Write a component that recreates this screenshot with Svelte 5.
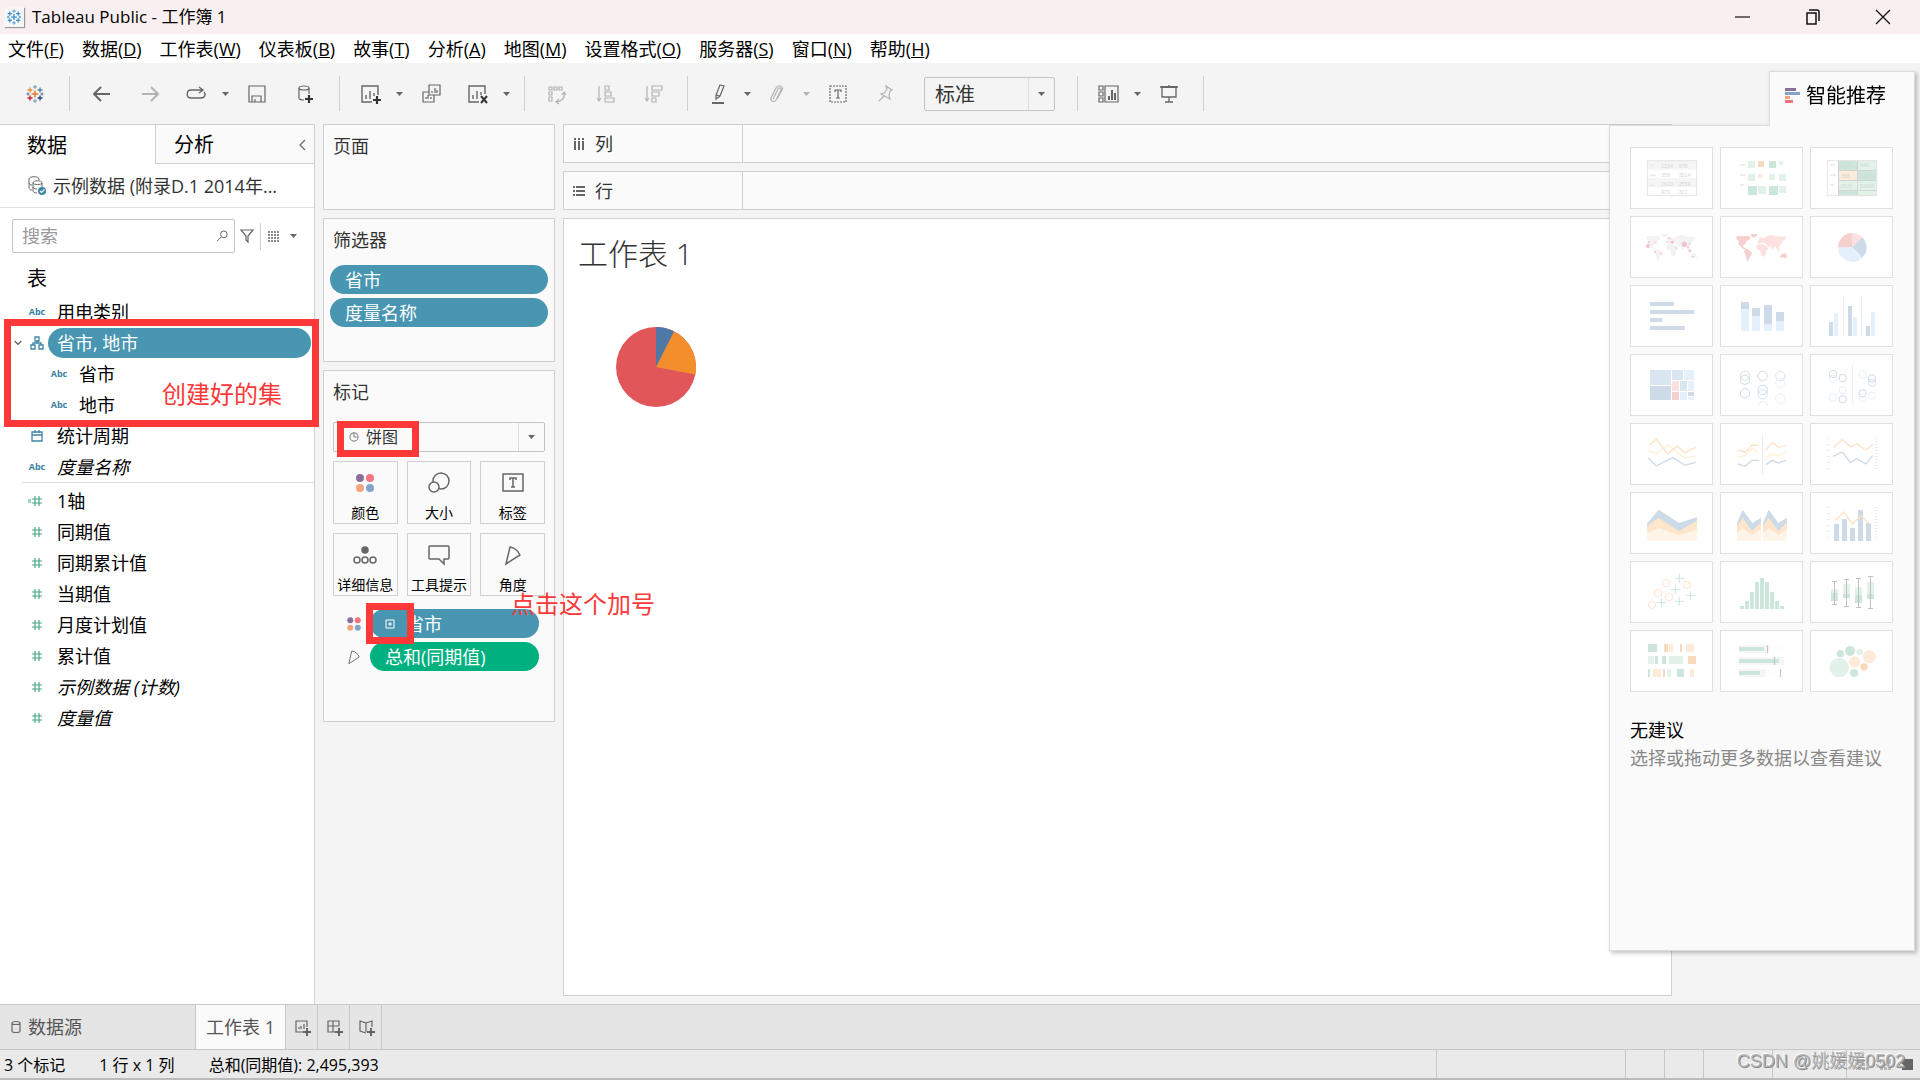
<script>
  const menus = [
    ["文件", "F"],
    ["数据", "D"],
    ["工作表", "W"],
    ["仪表板", "B"],
    ["故事", "T"],
    ["分析", "A"],
    ["地图", "M"],
    ["设置格式", "O"],
    ["服务器", "S"],
    ["窗口", "N"],
    ["帮助", "H"],
  ];

  const cross = (x, y, s, color, w = 1) =>
    `<path d="M${x - s} ${y}h${s * 2}M${x} ${y - s}v${s * 2}" stroke="${color}" stroke-width="${w}"/>`;
  const logo = (c) =>
    cross(12, 12, 3.5, c[0], 1.5) +
    cross(7, 8, 2.5, c[1], 1.4) +
    cross(17, 8, 2.5, c[2], 1.4) +
    cross(7, 16, 2.5, c[3], 1.4) +
    cross(17, 16, 2.5, c[4], 1.4) +
    cross(12, 5, 2, c[5]) +
    cross(12, 19, 2, c[5]) +
    cross(5, 12, 1.5, c[6]) +
    cross(19, 12, 1.5, c[6]);
  const plus = (x, y) => cross(x, y, 4, "#333", 2.2);

  const icons = {
    logo: logo(["#e8762d", "#eb912c", "#5b879b", "#c72035", "#1f457e", "#7199a6", "#5c6692"]),
    logoBlue: logo(Array(7).fill("#3a8fc4")),
    back: '<path d="M20 12H5M11 5l-7 7 7 7" stroke-width="2"/>',
    forward: '<path d="M4 12h15M13 5l7 7-7 7" stroke-width="2"/>',
    redo: '<path d="M18 8H7c-5 0-5 8 0 8h10c4 0 5-4 3-6M15 5l4 3-4 3" stroke-width="1.4"/>',
    save: '<path d="M4 4h16v16H4zM7 20v-6h9v6M10 17v3"/>',
    addData:
      '<ellipse cx="11" cy="6" rx="5" ry="2"/><path d="M6 6v10c0 1 2 2 5 2M16 6v6"/>' + plus(16, 17),
    newSheet: '<path d="M20 13V4H4v16h10M8 17v-4M12 17V9M16 14v-3" stroke-width="1.4"/>' + plus(19, 18),
    duplicate: '<path d="M10 3h11v10H10zM10 10H4v10h11v-7M13 11V9M16 11V6M18 11V8M7 17v-2M9 17v-4M12 17v-2"/>',
    clear:
      '<path d="M20 12V4H4v16h10M8 17v-4M12 17V9M16 13v-3" stroke-width="1.4"/><path d="M16 14l6 7M22 14l-6 7" stroke="#333" stroke-width="2"/>',
    swap: '<path d="M4 5h3v3H4zM9 5h3v3H9zM14 5h3v3h-3zM4 10h3v3H4zM4 15h3v4H4zM19 11c1 5-2 8-7 9M17 13l2-3 2 3M14 17l-3 3 3 2"/>',
    sortAsc: '<path d="M6 4v15M4 16l2 3 2-3M12 4h4v4h-4zM12 10h6v4h-6zM12 16h9v4h-9z"/>',
    sortDesc: '<path d="M6 4v15M4 16l2 3 2-3M11 4h10v4H11zM11 10h7v4h-7zM11 16h4v4h-4z"/>',
    pen: '<path d="M14 3l4 1-4 10-4 3v-4zM10 13l4 1" stroke-width="1.2"/><path d="M6 21h12" stroke-width="2"/>',
    clip: '<path d="M8 17l5-10c1-2 4-1 3 1l-5 10c-2 3-6 1-5-2l5-10c2-4 8-2 6 2l-5 9"/>',
    text: '<path d="M4 4h16v16H4z" stroke-dasharray="2 1"/><path d="M9 10V8h6v2M12 8v8M10 16h4"/>',
    pin: '<path d="M12 4l6 4-2 1-1 5 1 3-9-5 3-1 3-4zM10 14l-5 5"/>',
    cards: '<path d="M9 4h13v16H9zM3 4h4v4H3zM3 10h4v4H3zM3 16h4v4H3z"/><path d="M13 18v-4M16 18V8M19 18v-7" stroke-width="2"/>',
    present: '<path d="M3 5h18M5 5v10h14V5M12 15v5M8 20h8M12 3v2" stroke-width="1.3"/><path d="M4 5h16" stroke-width="2"/>',
    min: '<path d="M4 12h15" stroke="#111"/>',
    restore: '<path d="M6 8h9v11H6zM8 5h8q2 0 2 2v9" stroke="#111" stroke-width="1.5"/>',
    close: '<path d="M5 5l14 14M19 5L5 19" stroke="#111" stroke-width="1.3"/>',
    source:
      '<path d="M4 5c0-3 10-3 10 0v1M4 5v9c0 1 1 2 3 2M4 9c0 1 1 2 3 2M8 9c0-3 9-3 9 0v4M8 9v8c0 1 2 2 4 2M8 9c0 2 9 2 9 0M8 13c0 1 2 2 4 2" stroke-width="1"/><circle cx="17" cy="17" r="4" fill="#3d86a8" stroke="none"/><path d="M15 17l1.5 1.5 3-3" stroke="#fff"/>',
    search: '<circle cx="13" cy="10" r="4"/><path d="M10 13l-5 5"/>',
    filter: '<path d="M6 6h12l-5 6v6l-2-2v-4z"/>',
    grid: '<path d="M6 8h12M6 11h12M6 14h12M6 17h12" stroke-width="1.6" stroke-dasharray="2 1"/>',
    chevLeft: '<path d="M15 7l-5 5 5 5"/>',
    chevDown: '<path d="M7 9l5 5 5-5" stroke-width="2"/>',
    hierarchy: '<path d="M10 6h4v4h-4zM6 14h4v4H6zM14 14h4v4h-4zM12 10v2M8 14v-2h8v2" stroke="#3d86a8" stroke-width="1.3"/>',
    date: '<path d="M7 8h10v9H7zM7 11h10M10 6v3M14 6v3" stroke="#3d86a8" stroke-width="1.3"/>',
    number: '<path d="M10 7v10M14 7v10M7 10h10M7 14h10" stroke="#4aa886" stroke-width="1.2"/>',
    calc: '<path d="M10 7v10M14 7v10M7 10h10M7 14h10M3 11h3M3 13h3" stroke="#4aa886" stroke-width="1.2"/>',
    columns: '<path d="M8 6v2M12 6v2M16 6v2M8 9v9M12 9v9M16 9v9" stroke-width="2"/>',
    rows: '<path d="M6 8h2M6 12h2M6 16h2M9 8h9M9 12h9M9 16h9" stroke-width="2"/>',
    pie: '<circle cx="12" cy="12" r="4.5" stroke="#888"/><path d="M12 8v4h4" stroke="#888"/>',
    color:
      '<g stroke="none"><circle cx="7" cy="7" r="4" fill="#8a719b"/><circle cx="17" cy="7" r="4" fill="#f6737f"/><circle cx="7" cy="17" r="4" fill="#f2a57d"/><circle cx="17" cy="17" r="4" fill="#82a4ca"/></g>',
    size: '<circle cx="14" cy="10" r="8"/><circle cx="7" cy="16" r="5" fill="#fafafa"/>',
    label: '<path d="M2 3h20v17H2z"/><path d="M9 9V7h6v2M12 7v9M10 16h4"/>',
    detail: '<circle cx="12" cy="7" r="3" fill="#666"/><circle cx="4" cy="17" r="3"/><circle cx="12" cy="17" r="3"/><circle cx="20" cy="17" r="3"/>',
    tooltip: '<path d="M3 3h18q1 0 1 1v11q0 1-1 1h-4v5l-5-5H3q-1 0-1-1V4q0-1 1-1z"/>',
    angle: '<path d="M5 21L9 4c6 1 8 4 10 8z"/>',
    expand: '<path d="M8 8h8v8H8zM12 10v4M10 12h4" stroke="#fff" stroke-width="1"/>',
    datasource: '<path d="M8 8c0-2 8-2 8 0v8c0 2-8 2-8 0zM8 8c0 2 8 2 8 0"/>',
    addSheet: '<path d="M17 12V6H6v11h7M9 14v-2M11 14v-3M14 14V9"/><path d="M13 17h8M17 13v8" stroke-width="2"/>',
    addDash: '<path d="M17 11V6H6v11h7M11 6v11M6 11h11"/><path d="M13 17h8M17 13v8" stroke-width="2"/>',
    addStory: '<path d="M12 17V8L6 6v10l6 2M12 8l6-2v6"/><path d="M13 17h8M17 13v8" stroke-width="2"/>',
  };

  // "|" is a separator, a trailing caret marks a drop-down, off = disabled
  const tools = [
    { icon: "back", name: "撤消" },
    { icon: "forward", name: "重做", off: true },
    { icon: "redo", name: "重播", caret: true },
    { icon: "save", name: "保存" },
    { icon: "addData", name: "新建数据源" },
    "|",
    { icon: "newSheet", name: "新建工作表", caret: true },
    { icon: "duplicate", name: "复制" },
    { icon: "clear", name: "清除", caret: true },
    "|",
    { icon: "swap", name: "交换行和列", off: true },
    { icon: "sortAsc", name: "升序", off: true },
    { icon: "sortDesc", name: "降序", off: true },
    "|",
    { icon: "pen", name: "突出显示", caret: true },
    { icon: "clip", name: "组", caret: true, off: true },
    { icon: "text", name: "标签" },
    { icon: "pin", name: "固定", off: true },
  ];
  const toolsRight = [
    { icon: "cards", name: "显示/隐藏卡", caret: true },
    { icon: "present", name: "演示模式" },
  ];

  const dimensions = [
    { icon: "abc", text: "用电类别" },
    { icon: "hierarchy", text: "省市, 地市", selected: true },
    { icon: "abc", text: "省市", child: true },
    { icon: "abc", text: "地市", child: true },
    { icon: "date", text: "统计周期" },
    { icon: "abc", text: "度量名称", italic: true },
  ];
  const measures = [
    { icon: "calc", text: "1轴" },
    { icon: "number", text: "同期值" },
    { icon: "number", text: "同期累计值" },
    { icon: "number", text: "当期值" },
    { icon: "number", text: "月度计划值" },
    { icon: "number", text: "累计值" },
    { icon: "number", text: "示例数据 (计数)", italic: true },
    { icon: "number", text: "度量值", italic: true },
  ];

  const marks = [
    ["color", "颜色"],
    ["size", "大小"],
    ["label", "标签"],
    ["detail", "详细信息"],
    ["tooltip", "工具提示"],
    ["angle", "角度"],
  ];

  // thumbnail palette
  const B = "#cddae7";
  const M = "#d9e5f0";
  const L = "#e4f0fb";
  const G = "#cde6db";
  const g = "#e2f2e9";
  const O = "#fadabf";
  const o = "#feead8";
  const P = "#f6cfcf";
  const p = "#fde0e0";
  const Y = "#fff0d4";
  const E = "#ededed";

  const rects = (list) =>
    list.map(([x, y, w, h, f]) => `<rect x="${x}" y="${y}" width="${w}" height="${h}" fill="${f}"/>`).join("");
  const dots = (list) => list.map(([x, y, r, f]) => `<circle cx="${x}" cy="${y}" r="${r}" fill="${f}"/>`).join("");
  const rings = (list, r) =>
    list.map(([x, y, c]) => `<circle cx="${x}" cy="${y}" r="${r}" fill="none" stroke="${c}" stroke-width="3"/>`).join("");
  const line = (pts, c) => `<polyline points="${pts}" fill="none" stroke="${c}" stroke-width="4"/>`;
  const area = (pts, c) => `<polygon points="${pts}" fill="${c}"/>`;
  const nums = (list) =>
    list
      .map(([x, y, t]) => `<text x="${x}" y="${y}" font-size="16" font-family="Liberation Sans, sans-serif" fill="#d4d8d6">${t}</text>`)
      .join("");
  const frame = '<rect x="52" y="41" width="148" height="105" fill="none" stroke="#e4e4e4" stroke-width="3"/>';
  const ticks =
    rects([46, 64, 82, 100, 118, 136].map((y) => [51, y - 1, 9, 3, E])) +
    rects([46, 55, 64, 73, 82, 91, 100, 109, 118, 127, 136].map((y) => [195, y - 1, 9, 3, E]));
  const world = (a, b) =>
    area("48,62 58,60 70,61 84,59 93,65 88,71 80,75 77,83 70,87 69,92 76,97 81,101 70,98 62,92 56,84 56,74 50,70", a) +
    area("91,58 96,54 113,54 110,60 102,65 96,62", a) +
    area("74,99 84,100 97,110 92,120 87,128 83,138 80,130 77,116 72,107", a) +
    area("112,80 116,72 120,64 132,66 142,59 154,57 170,61 198,63 196,70 188,75 185,83 180,88 177,93 179,108 171,100 165,90 158,103 150,91 144,94 136,82 124,80 118,83", b) +
    area("109,88 118,83 132,86 140,90 145,98 138,106 138,115 130,124 124,116 121,104 111,100", b) +
    area("180,119 190,112 196,112 202,121 198,127 190,124 181,125", a);
  const bullet = [
    [75, 141],
    [120, 162],
    [63, 180],
  ];
  const boxes = [
    [63, 84, 96, 120, 61, 131],
    [99, 69, 99, 111, 55, 137],
    [135, 78, 102, 126, 52, 140],
    [171, 63, 99, 114, 46, 143],
  ];

  const thumbs = [
    ["文本表", rects([[52, 41, 148, 27, "#f5f5f5"], [52, 93, 148, 27, "#f5f5f5"], [60, 52, 15, 6, E], [60, 82, 18, 6, E], [60, 112, 12, 6, E]]) +
      nums([[93, 62, "1234"], [146, 62, "678"], [94, 89, "358"], [146, 89, "3014"], [93, 116, "2620"], [146, 116, "2559"], [94, 140, "971"], [146, 140, "322"]]) + frame],
    ["热图", rects([[60, 51, 15, 6, E], [60, 81, 18, 6, E], [60, 111, 12, 6, E], [84, 42, 21, 21, g], [114, 42, 18, 18, O], [147, 42, 21, 21, G], [177, 42, 12, 12, g], [84, 81, 21, 21, g], [114, 81, 12, 12, o], [147, 81, 18, 18, g], [177, 81, 21, 21, g], [84, 117, 27, 27, G], [114, 117, 24, 24, g], [147, 117, 27, 27, G], [177, 117, 21, 21, g]])],
    ["突出显示表", rects([[84, 41, 116, 105, "#d0d5d2"], [87, 42, 54, 27, G], [144, 42, 54, 27, g], [87, 72, 54, 27, o], [144, 72, 54, 27, G], [87, 102, 54, 27, g], [144, 102, 54, 27, g], [87, 132, 54, 12, G], [144, 132, 54, 12, g], [60, 51, 15, 6, E], [60, 81, 18, 6, E], [60, 111, 12, 6, E]]) +
      nums([[91, 60, "1234"], [150, 60, "546"], [92, 92, "358"], [150, 92, "310"], [91, 122, "2620"], [150, 122, "53890"]]) + frame],
    ["符号地图", world("#f3f3f3", "#f3f3f3") + dots([[54, 90, 6, "#eec4ca"], [57, 78, 3, "#eec4ca"], [76, 79, 5, p], [75, 108, 3, "#eec4ca"], [93, 112, 5, p], [112, 78, 4, p], [117, 67, 4, P], [127, 79, 5, "#eec4ca"], [138, 96, 3, P], [163, 85, 8, "#eec4ca"], [177, 84, 3, P], [174, 93, 3, "#eec4ca"], [179, 104, 5, P], [189, 122, 3, "#eec4ca"]])],
    ["地图", world(P, p)],
    ["饼图", `<path d="M127 94V51A43 43 0 0 1 157 64Z" fill="${p}"/><path d="M127 94L157 64A43 43 0 0 1 157 125Z" fill="${B}"/><path d="M127 94L157 125A43 43 0 0 1 84 94Z" fill="${L}"/><path d="M127 94H84A43 43 0 0 1 127 51Z" fill="${P}"/>`],
    ["水平条", rects([[60, 51, 72, 12, B], [60, 75, 132, 12, B], [60, 99, 36, 12, B], [60, 123, 105, 12, B]])],
    ["堆叠条", rects([[63, 51, 24, 21, B], [63, 72, 24, 66, L], [96, 69, 24, 24, B], [96, 93, 24, 45, L], [132, 60, 24, 57, B], [132, 117, 24, 21, L], [168, 81, 24, 27, B], [168, 108, 24, 30, L]])],
    ["并排条", rects([[57, 111, 12, 42, B], [72, 84, 12, 69, L], [99, 33, 3, 120, E], [114, 63, 12, 90, B], [129, 96, 12, 57, L], [153, 33, 3, 120, E], [168, 123, 12, 30, B], [183, 81, 12, 72, L]])],
    ["树状图", rects([[60, 48, 63, 45, M], [60, 96, 63, 42, B], [126, 48, 33, 30, M], [162, 48, 30, 30, L], [126, 81, 21, 30, p], [150, 81, 21, 30, M], [174, 81, 18, 30, L], [126, 114, 21, 24, P], [150, 114, 21, 24, L], [174, 114, 18, 12, B], [174, 129, 18, 9, L]])],
    ["圆视图", rings([[75, 65, M], [75, 77, B], [75, 118, B], [128, 66, B], [128, 121, M], [128, 108, B], [181, 66, M], [181, 87, L], [181, 134, L]], 14) + `<path d="M114 156a14 14 0 0 1 28 0" fill="none" stroke="${L}" stroke-width="3"/>`],
    ["并排圆", rings([[69, 74, L], [69, 60, B], [98, 72, B], [98, 108, L], [69, 130, L], [98, 136, B], [158, 61, L], [186, 86, M], [186, 73, B], [158, 118, B], [158, 131, L], [186, 125, L]], 11) + rects([[126, 33, 3, 120, E]])],
    ["线(连续)", line("55,82 79,92 113,66 164,106 197,99", Y) + line("58,66 79,48 113,93 142,69 164,90 197,73", "#fde2c8") + line("55,106 79,129 129,103 164,127 197,118", B)],
    ["线(离散)", line("54,103 75,97 96,76 116,91", Y) + line("136,104 157,94 175,99 198,87", Y) + line("54,81 76,87 96,66 117,67", "#fde2c8") + line("137,82 157,58 175,73 198,67", "#fde2c8") + line("54,123 75,130 96,112 117,112", B) + line("138,125 157,112 175,120 198,112", B) + rects([[126, 33, 3, 120, E]])],
    ["双线", ticks + line("70,74 97,49 122,72 140,62 168,81 188,65", "#fde2c8") + line("69,100 97,87 122,119 140,107 168,123 188,98", B)],
    ["面积图(连续)", area("51,95 86,53 147,93 201,76 201,147 51,147", B) + area("51,102 86,77 147,117 201,86 201,147 51,147", "#fee5cc") + area("51,124 86,109 147,130 201,113 201,147 51,147", "#fff4e8")],
    ["面积图(离散)", [0, 78].map((d) => `<g transform="translate(${d} 0)">` + area("51,94 68,53 97,93 123,77 123,147 51,147", B) + area("51,102 68,77 97,117 123,90 123,147 51,147", "#fee5cc") + area("51,124 68,109 97,129 123,112 123,147 51,147", "#fff4e8") + "</g>").join("")],
    ["双组合", ticks + rects([[72, 96, 15, 51, B], [96, 81, 15, 66, B], [120, 108, 15, 39, B], [144, 54, 15, 93, B], [168, 93, 15, 54, B]]) + line("76,85 102,60 127,96 153,72 180,97", "#fde2c8")],
    ["散点图", rings([[66, 132, "#fee4cc"], [84, 96, "#fee4cc"], [117, 108, "#fee4cc"], [108, 66, "#fee4cc"], [171, 72, "#fee4cc"]], 11) + [[148, 52], [136, 86], [94, 125], [148, 121], [181, 104]].map(([x, y]) => cross(x, y, 14, G, 3)).join("")],
    ["直方图", rects([135, 120, 93, 63, 51, 63, 93, 120, 135].map((y, i) => [60 + i * 15, y, 12, 144 - y, G]))],
    ["盒须图", boxes.map(([x, a, b, c, t, e]) => rects([[x, a, 21, b - a, g], [x, b, 21, c - b, G], [x + 9, t, 3, e - t, "#c0c0c0"], [x + 3, t - 1, 15, 3, "#c0c0c0"], [x + 3, e - 2, 15, 3, "#c0c0c0"]])).join("")],
    ["甘特图", rects([[54, 42, 27, 24, G], [102, 42, 12, 24, O], [117, 42, 12, 24, o], [150, 42, 6, 24, O], [168, 42, 24, 24, o], [54, 78, 18, 24, g], [75, 78, 9, 24, G], [96, 78, 12, 24, G], [117, 78, 42, 24, g], [174, 78, 24, 24, O], [54, 117, 6, 24, G], [69, 117, 24, 24, o], [99, 117, 6, 24, O], [111, 117, 12, 24, g], [141, 117, 21, 24, G], [180, 117, 12, 24, o]])],
    ["标靶图", bullet.map(([w, m], i) => rects([[57, 45 + i * 36, 138, 24, "#fcfdfc"], [57, 45 + i * 36, w + 15, 24, "#f6f6f6"], [57, 51 + i * 36, w, 12, G], [m, 45 + i * 36, 3, 24, "#c0c0c0"]])).join("")],
    ["填充气泡图", dots([[88, 113, 29, g], [91, 71, 11, G], [120, 63, 15, G], [149, 66, 10, g], [178, 80, 20, o], [134, 96, 17, o], [162, 111, 11, O], [132, 129, 12, G]])],
  ];
</script>

{#snippet icon(name, size = 24)}
  <svg class="icon" width={size} height={size} viewBox="0 0 24 24" aria-hidden="true">{@html icons[name]}</svg>
{/snippet}

{#snippet caret()}
  <svg class="caret" width="7" height="4" viewBox="0 0 7 4" aria-hidden="true"><path d="M0 0h7L3.5 4z" /></svg>
{/snippet}

{#snippet tool(t)}
  {#if t === "|"}
    <span class="sep"></span>
  {:else}
    <button class="tool" class:split={t.caret} class:off={t.off} aria-label={t.name}>{@render icon(t.icon)}</button>
    {#if t.caret}
      <button class="drop" class:off={t.off} aria-label="{t.name}选项">{@render caret()}</button>
    {/if}
  {/if}
{/snippet}

{#snippet field(f)}
  <li class:child={f.child} class:italic={f.italic}>
    <span class="twist">{#if f.selected}{@render icon("chevDown", 16)}{/if}</span>
    <span class="type">
      {#if f.icon === "abc"}<b>Abc</b>{:else}{@render icon(f.icon, 24)}{/if}
    </span>
    <span class="name" class:selected={f.selected}>{f.text}</span>
  </li>
{/snippet}

<div class="app">
  <header class="titlebar">
    <span class="appicon">{@render icon("logoBlue", 20)}</span>
    <h1>Tableau Public - 工作簿 1</h1>
    <div class="window">
      <button aria-label="最小化">{@render icon("min")}</button>
      <button aria-label="还原">{@render icon("restore")}</button>
      <button aria-label="关闭">{@render icon("close")}</button>
    </div>
  </header>

  <nav class="menubar">
    {#each menus as [text, key]}
      <button>{text}(<u>{key}</u>)</button>
    {/each}
  </nav>

  <div class="toolbar">
    <button class="home" aria-label="开始页面">{@render icon("logo")}</button>
    <span class="sep first"></span>
    {#each tools as t}{@render tool(t)}{/each}
    <div class="select fit">
      <select aria-label="适合"><option>标准</option></select>
      <span class="arrow">{@render caret()}</span>
    </div>
    <span class="sep"></span>
    {#each toolsRight as t}{@render tool(t)}{/each}
    <span class="sep"></span>
  </div>

  <main>
    <aside class="data">
      <div class="tabs">
        <button class="active">数据</button>
        <button class="inactive">分析 {@render icon("chevLeft")}</button>
      </div>
      <div class="source">{@render icon("source")}<span>示例数据 (附录D.1 2014年...</span></div>
      <div class="find">
        <div class="searchbox">
          <input type="text" placeholder="搜索" aria-label="搜索" />
          {@render icon("search", 20)}
        </div>
        <button aria-label="筛选">{@render icon("filter")}</button>
        <span class="bar"></span>
        <button aria-label="视图">{@render icon("grid")}</button>
        <button class="more" aria-label="更多">{@render caret()}</button>
      </div>
      <h2>表</h2>
      <ul>
        {#each dimensions as f}{@render field(f)}{/each}
      </ul>
      <ul class="measures">
        {#each measures as f}{@render field(f)}{/each}
      </ul>
    </aside>

    <section class="cards">
      <div class="card pages"><h3>页面</h3></div>
      <div class="card filters">
        <h3>筛选器</h3>
        <button class="pill">省市</button>
        <button class="pill">度量名称</button>
      </div>
      <div class="card marks">
        <h3>标记</h3>
        <div class="select type-select">
          <span class="lead">{@render icon("pie", 22)}</span>
          <select aria-label="标记类型"><option>饼图</option></select>
          <span class="arrow">{@render caret()}</span>
        </div>
        <div class="buttons">
          {#each marks as [name, text]}
            <button>{@render icon(name)}<span>{text}</span></button>
          {/each}
        </div>
        <div class="encoding">
          {@render icon("color", 18)}
          <button class="pill">{@render icon("expand")}省市</button>
        </div>
        <div class="encoding">
          {@render icon("angle", 18)}
          <button class="pill green">总和(同期值)</button>
        </div>
      </div>
    </section>

    <section class="work">
      <div class="shelf"><div>{@render icon("columns")}列</div></div>
      <div class="shelf"><div>{@render icon("rows")}行</div></div>
      <div class="sheet">
        <h2>工作表 1</h2>
        <svg width="80" height="80" viewBox="-40 -40 80 80" role="img" aria-label="饼图">
          <circle r="40" fill="#e15759" />
          <path d="M0 0V-40A40 40 0 0 1 18.2 -35.6Z" fill="#4e79a7" />
          <path d="M0 0L18.2 -35.6A40 40 0 0 1 39.3 7.6Z" fill="#f28e2b" />
        </svg>
      </div>
    </section>
  </main>

  <footer>
    <div class="sheets">
      <button class="ds">{@render icon("datasource")}数据源</button>
      <button class="current">工作表 1</button>
      <button class="add" aria-label="新建工作表">{@render icon("addSheet")}</button>
      <button class="add" aria-label="新建仪表板">{@render icon("addDash")}</button>
      <button class="add" aria-label="新建故事">{@render icon("addStory")}</button>
    </div>
    <div class="status">
      <span>3 个标记</span>
      <span>1 行 x 1 列</span>
      <span>总和(同期值): 2,495,393</span>
      <div class="cells"><i></i><i></i><i></i><i></i><i></i><i></i></div>
    </div>
  </footer>

  <aside class="showme">
    <button class="head">
      <svg width="16" height="17" viewBox="0 0 16 17" aria-hidden="true">
        <path d="M0 1h11v3H0z" fill="#8a719b" />
        <path d="M0 5h15v3H0z" fill="#82a4ca" />
        <path d="M0 9h5v3H0z" fill="#f2a57d" />
        <path d="M0 13h8v3H0z" fill="#f6737f" />
      </svg>
      智能推荐
    </button>
    <div class="panel">
      <div class="thumbs">
        {#each thumbs as [name, art]}
          <button aria-label={name}><svg viewBox="3 3 243 180">{@html art}</svg></button>
        {/each}
      </div>
      <p class="none">无建议</p>
      <p class="hint">选择或拖动更多数据以查看建议</p>
    </div>
  </aside>

  <div class="mark set"></div>
  <div class="mark kind"></div>
  <div class="mark plus"></div>
  <span class="note note-set">创建好的集</span>
  <span class="note note-plus">点击这个加号</span>
  <div class="views">
    <svg width="132" height="12" viewBox="0 0 132 12" aria-hidden="true">
      <path d="M5 2v8L0 6zM22 2v8l-5-4z" fill="#c4c4c4" />
      <path d="M76 1h11v3H76zM76 5h3v3h-3zM80 5h3v3h-3zM84 5h3v3h-3zM76 9h3v3h-3zM80 9h3v3h-3zM84 9h3v3h-3zM98 1h11v7H98zM98 9h3v3h-3zM102 9h3v3h-3zM106 9h3v3h-3z" fill="#b8b8b8" />
      <path d="M120 1h11v11h-11z" fill="#666" />
    </svg>
  </div>
  <span class="watermark">CSDN @姚媛媛0502</span>
</div>

<style>
  :global(body) {
    margin: 0;
  }
  .app {
    --line: #d0d0d0;
    --blue: #4996b2;
    --red: #fc3838;
    position: relative;
    display: flex;
    flex-direction: column;
    min-height: 100vh;
    overflow: hidden;
    background: #f4f4f4;
    color: #000;
    font: 18px/24px "Open Sans", "Noto Sans CJK SC", sans-serif;
  }
  .app * {
    box-sizing: border-box;
  }
  button,
  select,
  input {
    margin: 0;
    padding: 0;
    border: 0;
    border-radius: 0;
    background: none;
    color: inherit;
    font: inherit;
  }
  h1,
  h2,
  h3,
  p,
  ul {
    margin: 0;
    padding: 0;
    font-weight: 400;
    list-style: none;
  }
  .icon {
    flex: none;
    fill: none;
    stroke: #666;
    stroke-width: 1.2;
  }
  .caret {
    fill: #666;
  }
  .off {
    opacity: 0.45;
  }

  .titlebar {
    display: flex;
    align-items: center;
    height: 34px;
    background: #f9eff0;
  }
  .appicon {
    display: flex;
    margin-left: 4px;
    background: #f4f6f8;
    box-shadow: 1px 1px 1px #999;
  }
  h1 {
    flex: 1;
    margin-left: 8px;
    font-size: 17px;
  }
  .window {
    display: flex;
    padding-right: 2px;
  }
  .window button {
    display: flex;
    justify-content: center;
    width: 70px;
  }

  .menubar {
    display: flex;
    gap: 18px;
    height: 29px;
    padding-left: 8px;
    background: #fff;
  }

  .toolbar {
    display: flex;
    align-items: center;
    height: 61px;
  }
  .tool,
  .home,
  .drop {
    display: flex;
    align-items: center;
    justify-content: center;
    width: 48px;
    height: 34px;
  }
  .home {
    width: 69px;
  }
  .split {
    width: 44px;
  }
  .drop {
    width: 15px;
  }
  .sep {
    width: 1px;
    height: 35px;
    margin: 0 8px 0 10px;
    background: var(--line);
  }
  .sep.first {
    margin-left: 0;
  }
  .select {
    position: relative;
    display: flex;
    border: 1px solid #c4c4c4;
    border-radius: 2px;
    color: #333;
  }
  select {
    flex: 1;
    appearance: none;
  }
  .arrow {
    position: absolute;
    top: 0;
    right: 0;
    bottom: 0;
    display: flex;
    align-items: center;
    justify-content: center;
    width: 26px;
    border-left: 1px solid #ddd;
    pointer-events: none;
  }
  .fit {
    width: 131px;
    height: 34px;
    margin: 0 12px 0 14px;
    font-size: 20px;
  }
  .fit select {
    padding: 2px 0 0 10px;
  }

  main {
    display: flex;
    flex: 1;
    gap: 8px;
  }
  .data {
    width: 315px;
    border-top: 1px solid var(--line);
    border-right: 1px solid var(--line);
    background: #fff;
  }
  .tabs {
    display: flex;
    height: 39px;
    font-size: 20px;
  }
  .tabs button {
    display: flex;
    align-items: center;
    justify-content: space-between;
    padding-top: 2px;
  }
  .tabs .active {
    width: 155px;
    padding-left: 27px;
  }
  .tabs .inactive {
    flex: 1;
    padding-left: 18px;
    border: solid var(--line);
    border-width: 0 0 1px 1px;
    background: #fafafa;
  }
  .source {
    display: flex;
    align-items: center;
    gap: 4px;
    height: 44px;
    padding-left: 25px;
    border-bottom: 1px solid #e4e4e4;
    color: #333;
    white-space: nowrap;
  }
  .find {
    display: flex;
    align-items: center;
    padding: 11px 0 0 12px;
  }
  .find button {
    display: flex;
  }
  .searchbox {
    display: flex;
    align-items: center;
    width: 223px;
    height: 34px;
    padding-right: 1px;
    border: 1px solid #c4c4c4;
    border-radius: 2px;
  }
  .searchbox input {
    flex: 1;
    min-width: 0;
    padding-left: 9px;
  }
  .searchbox input::placeholder {
    color: #999;
    opacity: 1;
  }
  .bar {
    width: 1px;
    height: 27px;
    margin: 0 1px;
    background: var(--line);
  }
  .find .more {
    margin-left: 4px;
  }
  .data h2 {
    padding: 14px 0 5px 27px;
    font-size: 20px;
  }
  .data li {
    display: flex;
    align-items: center;
    height: 31px;
  }
  .data li.child {
    padding-left: 22px;
  }
  .twist {
    display: flex;
    width: 26px;
    padding-left: 10px;
  }
  .type {
    display: flex;
    justify-content: center;
    width: 22px;
  }
  .type b {
    color: #3c7f9f;
    font-size: 9px;
    font-style: normal;
  }
  .name {
    flex: 1;
    height: 30px;
    padding-left: 9px;
    line-height: 30px;
  }
  .selected {
    margin-right: 3px;
    border-radius: 15px;
    background: var(--blue);
    color: #fff;
  }
  .italic {
    font-style: italic;
  }
  .measures {
    position: relative;
    padding-top: 3px;
  }
  .measures::before {
    content: "";
    position: absolute;
    top: 0;
    right: 0;
    left: 22px;
    border-top: 1px solid #ddd;
  }

  .cards {
    width: 232px;
  }
  .card {
    margin-bottom: 8px;
    padding: 0 6px;
    border: 1px solid var(--line);
    background: #fafafa;
    color: #333;
  }
  .card h3 {
    padding: 9px 0 0 3px;
    font-size: 18px;
  }
  .pages {
    height: 86px;
  }
  .filters {
    height: 144px;
  }
  .filters h3 {
    margin-bottom: 13px;
  }
  .pill {
    display: flex;
    align-items: center;
    width: 100%;
    height: 29px;
    margin-bottom: 4px;
    padding-left: 15px;
    border-radius: 15px;
    background: var(--blue);
    color: #fff;
  }
  .marks {
    height: 352px;
    padding: 0 9px;
  }
  .marks h3 {
    padding-left: 0;
  }
  .type-select {
    height: 30px;
    margin: 18px 0 9px;
    font-size: 16px;
  }
  .lead {
    position: absolute;
    top: 3px;
    left: 9px;
    pointer-events: none;
  }
  .type-select select {
    padding-left: 32px;
  }
  .buttons {
    display: grid;
    grid-template-columns: repeat(3, 1fr);
    gap: 9px;
    margin-bottom: 13px;
  }
  .buttons button {
    display: flex;
    flex-direction: column;
    align-items: center;
    justify-content: space-between;
    height: 63px;
    padding-top: 9px;
    border: 1px solid var(--line);
    color: #000;
    font-size: 14px;
    line-height: 20px;
    white-space: nowrap;
  }
  .buttons .icon {
    stroke-width: 1.5;
  }
  .encoding {
    display: flex;
    align-items: flex-start;
    padding: 0 6px 0 12px;
  }
  .encoding > .icon {
    margin: 6px 7px 0 0;
  }
  .encoding .pill .icon {
    margin: 0 4px 0 -7px;
  }
  .green {
    background: #00b180;
  }

  .work {
    display: flex;
    flex: 1;
    flex-direction: column;
    gap: 8px;
    margin: 0 248px 8px 0;
  }
  .shelf {
    height: 39px;
    border: 1px solid var(--line);
    background: #fafafa;
    color: #333;
  }
  .shelf div {
    display: flex;
    align-items: center;
    gap: 4px;
    width: 179px;
    height: 100%;
    padding-left: 3px;
    border-right: 1px solid var(--line);
  }
  .sheet {
    flex: 1;
    padding: 14px;
    border: 1px solid var(--line);
    background: #fff;
  }
  .sheet h2 {
    color: #333;
    font-size: 30px;
    font-weight: 300;
    line-height: 42px;
  }
  .sheet svg {
    display: block;
    margin: 52px 0 0 38px;
  }

  .sheets {
    display: flex;
    height: 46px;
    border: solid #c8c8c8;
    border-width: 1px 0;
    background: #e5e5e5;
    color: #555;
  }
  .sheets button {
    display: flex;
    align-items: center;
    border-right: 1px solid #c8c8c8;
  }
  .sheets .ds {
    width: 196px;
    padding-left: 4px;
  }
  .sheets .current {
    justify-content: center;
    width: 90px;
    background: #fafafa;
  }
  .sheets .add {
    justify-content: center;
    width: 32px;
  }
  .status {
    display: flex;
    gap: 34px;
    height: 30px;
    padding-left: 4px;
    border-bottom: 2px solid #bbb;
    background: #eaeaea;
    font-size: 16px;
    line-height: 30px;
  }
  .cells {
    display: flex;
    margin-left: auto;
  }
  .cells i {
    width: 39px;
    border-left: 1px solid #c8c8c8;
  }
  .cells i:first-child {
    width: 189px;
  }
  .cells i:nth-child(4) {
    width: 69px;
  }
  .cells i:nth-child(5),
  .cells i:last-child {
    width: 74px;
  }

  .showme {
    position: absolute;
    top: 71px;
    right: 5px;
    display: flex;
    flex-direction: column;
    align-items: flex-end;
    width: 306px;
    filter: drop-shadow(2px 2px 2px rgba(0, 0, 0, 0.25));
  }
  .head {
    position: relative;
    z-index: 1;
    display: flex;
    align-items: center;
    gap: 5px;
    width: 146px;
    height: 55px;
    padding: 0 0 7px 15px;
    border: 1px solid #ddd;
    border-bottom: 0;
    background: #fafafa;
    font-size: 20px;
  }
  .panel {
    width: 100%;
    margin-top: -1px;
    padding: 21px 20px 178px;
    border: 1px solid #ddd;
    background: #fafafa;
  }
  .thumbs {
    display: grid;
    grid-template-columns: repeat(3, 83px);
    gap: 7px;
    margin-bottom: 24px;
  }
  .thumbs button {
    height: 62px;
    border: 1px solid #e0e0e0;
    background: #fff;
  }
  .thumbs svg {
    display: block;
    width: 100%;
    height: 100%;
  }
  .panel p {
    line-height: 28px;
    white-space: nowrap;
  }
  .hint {
    color: #888;
  }

  .mark {
    position: absolute;
    border: 7px solid var(--red);
    pointer-events: none;
  }
  .set {
    top: 319px;
    left: 4px;
    width: 315px;
    height: 108px;
  }
  .kind {
    top: 421px;
    left: 337px;
    width: 82px;
    height: 36px;
  }
  .mark.plus {
    top: 603px;
    left: 366px;
    width: 48px;
    height: 41px;
  }
  .note {
    position: absolute;
    color: var(--red);
    font-size: 24px;
    line-height: 32px;
  }
  .note-set {
    top: 378px;
    left: 162px;
  }
  .note-plus {
    top: 588px;
    left: 511px;
  }
  .views {
    position: absolute;
    right: 6px;
    bottom: 10px;
    display: flex;
  }
  .watermark {
    position: absolute;
    right: 15px;
    bottom: 7px;
    color: #b4b4b4;
    font-family: "Liberation Sans", "Noto Sans CJK SC", sans-serif;
    font-size: 18px;
    font-weight: 300;
    text-shadow:
      1px 1px 0 #888,
      -1px -1px 0 #fff;
  }
</style>
